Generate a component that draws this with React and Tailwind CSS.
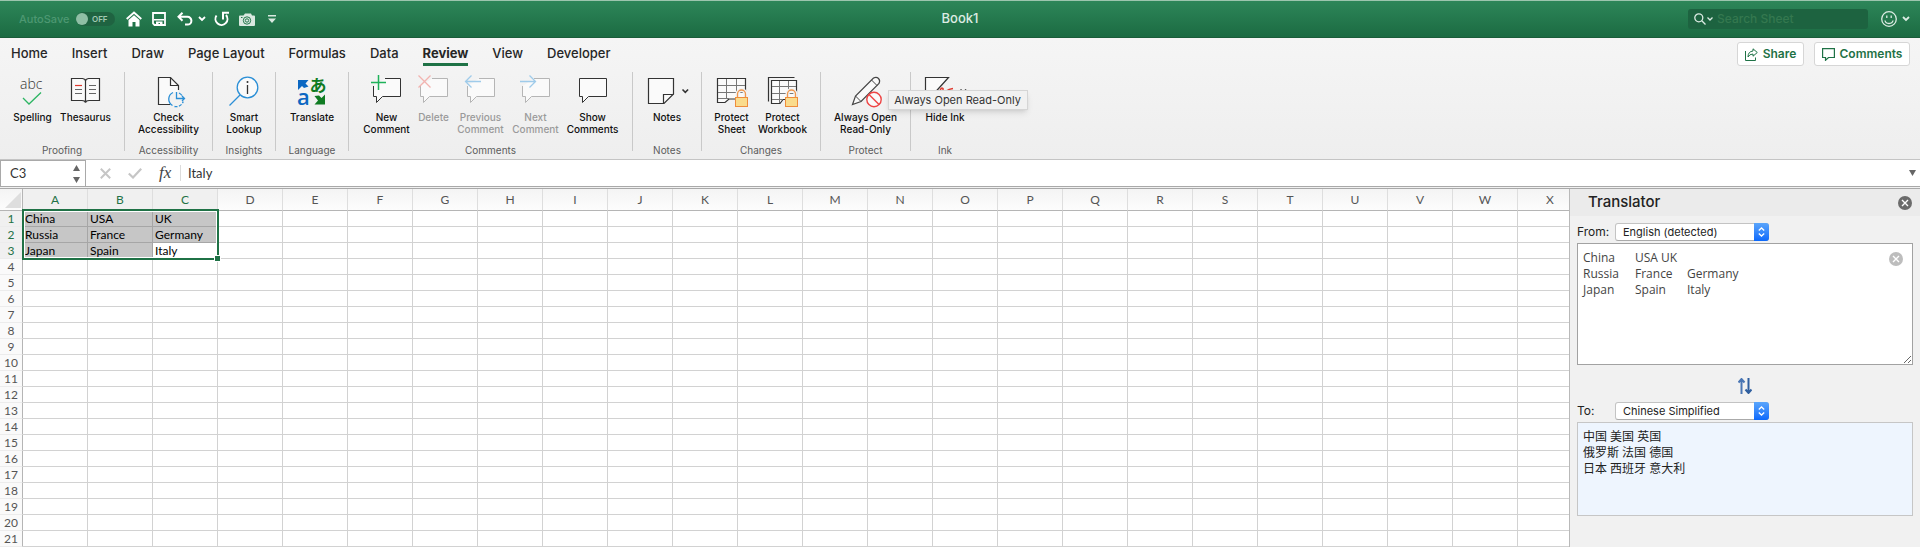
import React from 'react';
import clsx from 'clsx';

const TABS = ['Home', 'Insert', 'Draw', 'Page Layout', 'Formulas', 'Data', 'Review', 'View', 'Developer'];
const COLUMNS = 'ABCDEFGHIJKLMNOPQRSTUVWX'.split('');
const ROWS = Array.from({ length: 21 }, (_, i) => i + 1);
const DATA = [
  ['China', 'USA', 'UK'],
  ['Russia', 'France', 'Germany'],
  ['Japan', 'Spain', 'Italy'],
];

const Icon = ({ children }) => (
  <svg className="h-9 w-9 overflow-visible" viewBox="0 0 36 36" fill="none" aria-hidden="true">
    {children}
  </svg>
);

const Chevron = ({ className }) => (
  <svg className={className} width="8" height="6" viewBox="0 0 8 6" fill="none" stroke="currentColor" strokeWidth="1.8" aria-hidden="true">
    <path d="M1 1l3 3 3-3" />
  </svg>
);

const Bubble = ({ cut, stroke = '#333' }) => (
  <path
    d={
      cut
        ? 'M16 6.5H31.5V24.5H13.5L7.5 30.5V24.5H4.5V14'
        : 'M4.5 6.5H31.5V24.5H13.5L7.5 30.5V24.5H4.5Z'
    }
    fill="#fafafa"
    stroke={stroke}
  />
);

const Lock = ({ x }) => (
  <g transform={`translate(${x} 0)`}>
    <path d="M2.5 25V22a4 4 0 0 1 8 0V25" stroke="#f3f3f3" strokeWidth="4" />
    <path d="M2.5 25V22a4 4 0 0 1 8 0V25" stroke="#f0964b" strokeWidth="1.3" />
    <rect x="0.5" y="25.5" width="12" height="9" fill="#fadc8c" stroke="#ee8d3c" />
  </g>
);

const SpellingIcon = () => (
  <Icon>
    <text x="5" y="17" fontSize="14" fontWeight="300" fontFamily="Open Sans, sans-serif" fill="#333">abc</text>
    <path d="M8 26l6 6L26 20.500" stroke="#2db563" strokeWidth="1.300" />
  </Icon>
);

const ThesaurusIcon = () => (
  <Icon>
    <path d="M3.500 6.500H14.500Q17.500 7 17.500 9Q17.500 7 20.500 6.500H31.500V28.500H21Q18 28.500 17.500 30.500Q17 28.500 14 28.500H3.500Z" fill="#fafafa" stroke="#333" strokeWidth="1.200" />
    <path d="M17.500 9V30" stroke="#333" strokeWidth="1.200" />
    <path d="M7 13.500H14" stroke="#e0392e" strokeWidth="1.200" />
    <path d="M7 17.500H14M7 21.500H14M21 13.500H28M21 17.500H28M21 21.500H28" stroke="#666" />
  </Icon>
);

const AccessibilityIcon = () => (
  <Icon>
    <path d="M19 32.500H7.500V5.500H19.500L27.500 13.500V18" fill="#fafafa" stroke="#333" strokeWidth="1.200" />
    <path d="M19.500 5.500V13.500H27.500" stroke="#333" strokeWidth="1.200" />
    <circle cx="25" cy="27.300" r="7.300" fill="#f2f2f2" />
    <path d="M22 20.500a7.300 7.300 0 0 0-.5 13" stroke="#2b8fd6" strokeWidth="1.300" />
    <path d="M23.500 34.500a7.300 7.300 0 0 0 8.700-5" stroke="#2b8fd6" strokeWidth="1.300" strokeDasharray="3 1.500" />
    <path d="M25.500 20V26.500H33.500M31 24l2.500 2.500L31 29" stroke="#2b8fd6" strokeWidth="1.300" />
    <path d="M28 21a7.300 7.300 0 0 1 3 2.500" stroke="#2b8fd6" strokeWidth="1.300" />
  </Icon>
);

const LookupIcon = () => (
  <Icon>
    <circle cx="21.500" cy="15.500" r="10.300" fill="#fafafa" stroke="#2b8fd6" strokeWidth="1.300" />
    <path d="M14 23L3.500 33.500" stroke="#2b8fd6" strokeWidth="1.300" />
    <path d="M21.500 13V22" stroke="#333" strokeWidth="1.300" />
    <circle cx="21.500" cy="10" r="1" fill="#333" />
  </Icon>
);

const TranslateIcon = () => (
  <Icon>
    <path d="M4 8H14.500L11.500 11.500L14.500 14.500L10 16L8 14L4 18Z" fill="#0b67c2" />
    <text x="3" y="32.500" fontSize="22" fontWeight="600" fontFamily="Open Sans, sans-serif" fill="#0b67c2">a</text>
    <text x="15.500" y="19.500" fontSize="17" fontWeight="700" fontFamily="Noto Sans CJK JP, sans-serif" fill="#0f7b22">あ</text>
    <path d="M31 22.500V32.500H20.500L24 28.500L20.500 24L25 23.500L27.500 26Z" fill="#0f7b22" />
  </Icon>
);

const NewCommentIcon = () => (
  <Icon>
    <Bubble cut />
    <path d="M9.500 3V18M2 10.500H17" stroke="#1fb25a" strokeWidth="1.500" />
  </Icon>
);

const DeleteIcon = () => (
  <Icon>
    <Bubble cut stroke="#b5b5b5" />
    <path d="M2.500 3.500l12 12M14.500 3.500l-12 12" stroke="#f2b3b0" strokeWidth="1.300" />
  </Icon>
);

const PreviousIcon = () => (
  <Icon>
    <Bubble cut stroke="#b5b5b5" />
    <path d="M18 9.500H3M8.500 3.500l-6 6 6 6" stroke="#9fcbea" strokeWidth="1.300" />
  </Icon>
);

const NextIcon = () => (
  <Icon>
    <Bubble cut stroke="#b5b5b5" />
    <path d="M2 9.500H17M11.500 3.500l6 6-6 6" stroke="#9fcbea" strokeWidth="1.300" />
  </Icon>
);

const ShowIcon = () => (
  <Icon>
    <Bubble />
  </Icon>
);

const NotesIcon = () => (
  <Icon>
    <path d="M-.5 6.500H24.500V22L15 31.500H-.5Z" fill="#fafafa" stroke="#333" strokeWidth="1.200" />
    <path d="M14.500 31.500V22.500H24.500" stroke="#333" strokeWidth="1.200" />
    <path d="M33.500 17.500l2.800 2.800 2.800-2.800" stroke="#333" strokeWidth="1.600" />
  </Icon>
);

const ProtectSheetIcon = () => (
  <Icon>
    <path d="M3.500 6.500H31.500V27H15L11 30.500H3.500Z" fill="#fafafa" stroke="#333" strokeWidth="1.200" />
    <path d="M4 13.500H31M4 20.500H31M12.500 7V26M22.500 7V26M4 26.500H15" stroke="#777" />
    <Lock x={21} />
  </Icon>
);

const ProtectWorkbookIcon = () => (
  <Icon>
    <path d="M3.500 29.500V5.500H29.500" stroke="#333" strokeWidth="1.200" />
    <path d="M6.500 8.500H31.500V27.500H18L15 31.500H6.500Z" fill="#fafafa" stroke="#333" strokeWidth="1.200" />
    <path d="M7 14.500H31M7 21.500H31M14.500 9V31M23.500 9V27M7 27.500H18" stroke="#777" />
    <Lock x={20} />
  </Icon>
);

const ReadOnlyIcon = () => (
  <Icon>
    <path d="M4.500 32.500L7.500 24L25.500 6Q28.500 4.500 30.500 6.500Q32.500 8.500 31 11.500L13 29.500Z" fill="#fafafa" stroke="#444" strokeWidth="1.200" />
    <path d="M7.500 24L13 29.500M23.500 8L29 13.500" stroke="#444" />
    <circle cx="26" cy="27.500" r="7.200" fill="#fafafa" stroke="#ee4444" strokeWidth="1.400" />
    <path d="M21 22.500l10 10" stroke="#ee4444" strokeWidth="1.400" />
  </Icon>
);

const HideInkIcon = () => (
  <Icon>
    <path d="M-1.500 30V5.500H21.500L3 26" fill="#fafafa" stroke="#333" strokeWidth="1.200" />
    <path d="M13 19q1-4 3-2.500v3M19 19q3-2 7-2.500" stroke="#e0392e" strokeWidth="1.500" />
    <path d="M33.500 17.500l2.800 2.800 2.800-2.800" stroke="#333" strokeWidth="1.600" />
  </Icon>
);

const GROUPS = [
  {
    name: 'Proofing',
    width: 'w-[124px]',
    items: [
      { lines: ['Spelling'], icon: SpellingIcon, width: 'w-10' },
      { lines: ['Thesaurus'], icon: ThesaurusIcon, width: 'w-[52px]' },
    ],
  },
  { name: 'Accessibility', width: 'w-[87px]', items: [{ lines: ['Check', 'Accessibility'], icon: AccessibilityIcon, width: 'w-16' }] },
  { name: 'Insights', width: 'w-[62px]', items: [{ lines: ['Smart', 'Lookup'], icon: LookupIcon, width: 'w-10' }] },
  { name: 'Language', width: 'w-[72px]', items: [{ lines: ['Translate'], icon: TranslateIcon, width: 'w-12' }] },
  {
    name: 'Comments',
    width: 'w-[283px]',
    items: [
      { lines: ['New', 'Comment'], icon: NewCommentIcon, width: 'w-12' },
      { lines: ['Delete'], icon: DeleteIcon, width: 'w-8', disabled: true },
      { lines: ['Previous', 'Comment'], icon: PreviousIcon, width: 'w-12', disabled: true },
      { lines: ['Next', 'Comment'], icon: NextIcon, width: 'w-12', disabled: true },
      { lines: ['Show', 'Comments'], icon: ShowIcon, width: 'w-[52px]' },
    ],
  },
  { name: 'Notes', width: 'w-[68px]', items: [{ lines: ['Notes'], icon: NotesIcon, width: 'w-10' }] },
  {
    name: 'Changes',
    width: 'w-[118px]',
    items: [
      { lines: ['Protect', 'Sheet'], icon: ProtectSheetIcon, width: 'w-9' },
      { lines: ['Protect', 'Workbook'], icon: ProtectWorkbookIcon, width: 'w-[52px]' },
    ],
  },
  {
    name: 'Protect',
    width: 'w-[89px]',
    items: [{ lines: ['Always Open', 'Read-Only'], icon: ReadOnlyIcon, width: 'w-16', tooltip: 'Always Open Read-Only' }],
  },
  { name: 'Ink', width: 'w-[68px]', items: [{ lines: ['Hide Ink'], icon: HideInkIcon, width: 'w-12' }], last: true },
];

function TitleBar() {
  return (
    <header className="grid h-[38px] grid-cols-[1fr_auto_1fr] items-center border-t border-b border-t-[#9cc5ae] border-b-[#1a5c39] bg-linear-to-b from-[#2d8659] to-[#1b6b42] text-white">
      <div className="flex items-center pl-[19px]">
        <span className="w-[50px] text-[11px] font-medium whitespace-nowrap text-[#4d9872]">AutoSave</span>
        <button role="switch" aria-checked="false" aria-label="AutoSave" className="ml-[7px] flex h-[14px] w-[39px] items-center gap-1 rounded-full bg-[#1f6341] text-[8px] font-semibold text-[#a3c9b4]">
          <span className="h-3 w-3 rounded-full bg-[#8fbfa5]" />
          OFF
        </button>
        <button aria-label="Home" className="ml-[11px]">
          <svg width="16" height="16" viewBox="0 0 16 16" fill="none" aria-hidden="true">
            <path d="M.7 8L8 1.500L15.300 8" stroke="#fff" strokeWidth="1.900" />
            <path d="M2.500 9L8 4.200L13.500 9V15.500H9.500V11H6.500V15.500H2.500Z" fill="#fff" />
          </svg>
        </button>
        <button aria-label="Save" className="ml-[10px]">
          <svg width="14" height="14" viewBox="0 0 14 14" fill="none" aria-hidden="true">
            <path d="M1 1H13V13H2.500L1 11.500Z" stroke="#fff" strokeWidth="1.800" />
            <path d="M2 7H12V8.500H2ZM4 9.500H10.500V13H8V11H6.500V13H4Z" fill="#fff" />
          </svg>
        </button>
        <button aria-label="Undo" className="ml-[11px]">
          <svg width="16" height="14" viewBox="0 0 16 14" fill="none" stroke="#fff" strokeWidth="2" aria-hidden="true">
            <path d="M5.500.8L1.500 4.800L5.500 8.800M2 4.800H10.500a3.900 3.900 0 0 1 0 7.800H8" />
          </svg>
        </button>
        <button aria-label="Undo history" className="ml-[5px]"><Chevron /></button>
        <button aria-label="Redo" className="ml-2">
          <svg width="16" height="16" viewBox="0 0 16 16" fill="none" stroke="#fff" strokeWidth="2" aria-hidden="true">
            <path d="M2.500 4.500A6 6 0 1 0 12 4M8 1.800H15M9 1.500V8.500" />
          </svg>
        </button>
        <button aria-label="Camera" className="ml-[9px]">
          <svg width="16" height="13" viewBox="0 0 16 13" aria-hidden="true">
            <path d="M1 2.500H4.500L6 .5H12L13 2.500H15Q16 2.500 16 3.500V12Q16 13 15 13H1Q0 13 0 12V3.500Q0 2.500 1 2.500Z" fill="#d9e9e0" />
            <circle cx="8" cy="7.500" r="3.700" fill="none" stroke="#23774b" />
            <circle cx="8" cy="7.500" r="1.700" fill="none" stroke="#23774b" />
            <path d="M2 4.500H3.500" stroke="#23774b" />
          </svg>
        </button>
        <button aria-label="Customize toolbar" className="ml-[13px]">
          <svg width="8" height="8" viewBox="0 0 8 8" fill="#d9e9e0" aria-hidden="true">
            <path d="M0 0H8V1.500H0ZM0 3.500H8L4 8Z" />
          </svg>
        </button>
      </div>
      <h1 className="text-[13px] font-medium text-[#dcebe3]">Book1</h1>
      <div className="flex items-center justify-end pr-[10px]">
        <label className="flex h-5 w-[180px] items-center rounded-[3px] bg-[#1d6340] pl-[6px]">
          <svg width="12" height="12" viewBox="0 0 12 12" fill="none" stroke="#dcebe3" strokeWidth="1.300" aria-hidden="true">
            <circle cx="4.800" cy="4.800" r="4" />
            <path d="M7.800 7.800l3.700 3.700" />
          </svg>
          <svg className="ml-px" width="6" height="4" viewBox="0 0 6 4" fill="none" stroke="#dcebe3" strokeWidth="1.300" aria-hidden="true">
            <path d="M.5.500L3 3 5.500.500" />
          </svg>
          <input type="search" placeholder="Search Sheet" aria-label="Search Sheet" className="ml-1 w-[140px] bg-transparent text-xs font-medium outline-none placeholder:text-[#34784f]" />
        </label>
        <button aria-label="Feedback" className="ml-[13px] flex items-center gap-[5px] text-[#dcebe3]">
          <svg width="16" height="16" viewBox="0 0 16 16" fill="none" stroke="currentColor" strokeWidth="1.300" aria-hidden="true">
            <circle cx="8" cy="8" r="7.300" />
            <path d="M4 9.500q.5 3 4 3t4-3M5.800 4.500v2.500M10.200 4.500v2.500" />
          </svg>
          <Chevron />
        </button>
      </div>
    </header>
  );
}

function TabBar() {
  return (
    <div className="flex h-[34px] items-start justify-between pr-[10px] pl-[11px]">
      <nav className="flex gap-6 pt-[6px] text-[13px] leading-[19px] font-medium">
        {TABS.map((tab) => (
          <a
            key={tab}
            href="#"
            className={clsx('border-b-[3px] whitespace-nowrap', tab === 'Review' ? 'border-[#1f7246] font-bold' : 'border-transparent')}
          >
            {tab}
          </a>
        ))}
      </nav>
      <div className="flex gap-[10px] pt-1 text-xs font-semibold text-[#1f7246]">
        <button className="flex h-6 w-[67px] items-center justify-center gap-[5px] rounded-[3px] border border-[#d6d6d6] bg-white">
          <svg width="13" height="13" viewBox="0 0 13 13" fill="none" stroke="currentColor" aria-hidden="true">
            <path d="M.5 3V12.500H10.500V9.500" />
            <path d="M8 .8L12.300 4.500L8 8.200V6Q4.500 6 3 9Q3 3.500 8 3Z" />
          </svg>
          Share
        </button>
        <button className="flex h-6 w-24 items-center justify-center gap-[5px] rounded-[3px] border border-[#d6d6d6] bg-white">
          <svg width="13" height="13" viewBox="0 0 13 13" fill="none" stroke="currentColor" strokeWidth="1.200" aria-hidden="true">
            <path d="M.6.600H12.400V9.500H6.500L3.500 12.300V9.500H.6Z" />
          </svg>
          Comments
        </button>
      </div>
    </div>
  );
}

function RibbonItem({ lines, icon: Glyph, width, disabled, tooltip }) {
  return (
    <div className="relative">
      <button disabled={disabled} className={clsx('flex flex-col items-center text-[10px] leading-3 font-medium', width, disabled ? 'text-[#9a9a9a]' : 'text-[#111]')}>
        <Glyph />
        <span className="mt-[3px] flex flex-col items-center whitespace-nowrap">
          {lines.map((line) => (
            <span key={line}>{line}</span>
          ))}
        </span>
      </button>
      {tooltip && (
        <div role="tooltip" className="absolute top-[18px] left-[54px] z-10 flex h-5 w-[140px] items-center justify-center border border-[#d5d5d5] bg-[#f1f1f1] text-[11px] whitespace-nowrap text-[#333] shadow-md">
          {tooltip}
        </div>
      )}
    </div>
  );
}

function Ribbon() {
  return (
    <div className="flex h-[88px] border-b border-[#c4c4c4]">
      {GROUPS.map((group) => (
        <React.Fragment key={group.name}>
          <section className={clsx('flex flex-col items-center', group.width)}>
            <div className="flex gap-[7px]">
              {group.items.map((item) => (
                <RibbonItem key={item.lines.join(' ')} {...item} />
              ))}
            </div>
            <h2 className="mt-auto pb-[3px] text-[10px] leading-3 text-[#5c5c5c]">{group.name}</h2>
          </section>
          {!group.last && <div className="h-[79px] w-px bg-[#c9c9c9]" />}
        </React.Fragment>
      ))}
    </div>
  );
}

function FormulaBar() {
  return (
    <div className="flex h-[27px] items-stretch border-b border-[#a9a9a9] bg-white">
      <div className="flex w-[86px] items-center justify-between border border-b-0 border-[#a9a9a9] pr-[5px] pl-[9px]">
        <input aria-label="Name box" defaultValue="C3" className="w-12 pt-px font-[Lato] text-[13px] text-[#333] outline-none" />
        <svg width="7" height="18" viewBox="0 0 7 18" fill="#666" aria-hidden="true">
          <path d="M3.500 0L7 6H0ZM3.500 18L0 12H7Z" />
        </svg>
      </div>
      <div className="flex flex-1 items-center pr-1 pl-[14px]">
        <button aria-label="Cancel">
          <svg width="11" height="11" viewBox="0 0 11 11" stroke="#c6c6c6" strokeWidth="2" aria-hidden="true">
            <path d="M.8.800L10.200 10.200M10.200.800L.8 10.200" />
          </svg>
        </button>
        <button aria-label="Enter" className="ml-[17px]">
          <svg width="14" height="11" viewBox="0 0 14 11" fill="none" stroke="#c6c6c6" strokeWidth="2.200" aria-hidden="true">
            <path d="M.8 5.500L5 9.500L13.200.8" />
          </svg>
        </button>
        <button aria-label="Insert function" className="ml-[17px] w-[22px] border-r border-[#dcdcdc] text-left font-['Liberation_Serif'] text-[17px] leading-4 text-[#444] italic">
          fx
        </button>
        <input aria-label="Formula" defaultValue="Italy" className="ml-[7px] flex-1 pt-px font-[Lato] text-[13px] text-[#333] outline-none" />
        <button aria-label="Expand formula bar">
          <svg width="7" height="6" viewBox="0 0 7 6" fill="#666" aria-hidden="true">
            <path d="M0 0H7L3.500 6Z" />
          </svg>
        </button>
      </div>
    </div>
  );
}

function Sheet() {
  return (
    <div className="relative min-w-0 flex-1 overflow-hidden bg-white font-[Lato]">
      <table className="w-[1583px] table-fixed border-separate border-spacing-0">
        <thead>
          <tr className="h-[22px] bg-linear-to-b from-[#f4f4f4] to-[#fdfdfd]">
            <th className="w-[23px] border-r border-b border-[#b5b5b5] p-0">
              <svg className="ml-[5px]" width="16" height="16" viewBox="0 0 16 16" fill="#dedede" aria-hidden="true">
                <path d="M16 0V16H0Z" />
              </svg>
            </th>
            {COLUMNS.map((col, i) => (
              <th
                key={col}
                scope="col"
                className={clsx('w-[65px] border-r border-b border-r-[#dedede] border-b-[#b5b5b5] p-0 text-xs font-normal', i < 3 ? 'bg-[#f0f0f0] text-[#1f7246]' : 'text-[#555]')}
              >
                {col}
              </th>
            ))}
          </tr>
        </thead>
        <tbody>
          {ROWS.map((row, r) => (
            <tr key={row} className="h-4">
              <th
                scope="row"
                className={clsx('border-r border-b border-r-[#b5b5b5] border-b-[#ececec] p-0 text-xs leading-[15px] font-normal', r < 3 ? 'bg-[#f0f0f0] text-[#1f7246]' : 'bg-[#fafafa] text-[#555]')}
              >
                {row}
              </th>
              {COLUMNS.map((col, c) => {
                const selected = r < 3 && c < 3 && !(r === 2 && c === 2);
                return (
                  <td
                    key={col}
                    className={clsx('border-r border-b p-0 pl-[2px] text-xs leading-[15px] text-black', selected ? 'border-[#a6a6a6] bg-[#c6c6c6]' : 'border-[#d2d2d2]')}
                  >
                    {DATA[r]?.[c]}
                  </td>
                );
              })}
            </tr>
          ))}
        </tbody>
      </table>
      {/* Selection outline and fill handle */}
      <div className="pointer-events-none absolute top-5 left-[22px] h-[51px] w-[197px] border-2 border-[#1f7246]">
        <div className="h-full border border-white" />
        <div className="absolute -right-[4px] -bottom-[4px] h-[7px] w-[7px] border border-white bg-[#1f7246]" />
      </div>
    </div>
  );
}

function LanguageSelect({ id, label, value }) {
  return (
    <div className="flex items-center">
      <label htmlFor={id} className="w-[38px] text-xs text-[#222]">{label}</label>
      <div className="relative">
        <select id={id} defaultValue={value} className="block h-[18px] w-[154px] appearance-none rounded-[3px] border border-[#c3c3c3] border-b-[#aaa] bg-white pl-[7px] text-[11px] leading-4 text-[#222]">
          <option>{value}</option>
        </select>
        <span className="pointer-events-none absolute inset-y-0 right-0 flex w-[15px] items-center justify-center rounded-r-[3px] bg-linear-to-b from-[#5aa5fb] to-[#0a68fb]">
          <svg width="7" height="10" viewBox="0 0 7 10" fill="none" stroke="#fff" strokeWidth="1.300" aria-hidden="true">
            <path d="M.8 3.500L3.500 1L6.200 3.500M.8 6.500L3.500 9L6.200 6.500" />
          </svg>
        </span>
      </div>
    </div>
  );
}

const CloseIcon = ({ fill }) => (
  <svg className="block" width="14" height="14" viewBox="0 0 14 14" aria-hidden="true">
    <circle cx="7" cy="7" r="7" fill={fill} />
    <path d="M4 4l6 6M10 4l-6 6" stroke="#fff" strokeWidth="1.400" />
  </svg>
);

function Translator() {
  return (
    <aside className="w-[351px] shrink-0 border-l border-[#b9b9b9] bg-[#f1f1f1]">
      <div className="flex h-[27px] items-center justify-between bg-[#ebebeb] pr-2 pl-[18px]">
        <h2 className="text-[15px] font-medium text-[#222]">Translator</h2>
        <button aria-label="Close"><CloseIcon fill="#6b6b6b" /></button>
      </div>
      <div className="flex flex-col pt-[7px] pr-[7px] pl-[7px]">
        <LanguageSelect id="from" label="From:" value="English (detected)" />
        <div className="relative mt-[2px]">
          <textarea
            aria-label="Source text"
            defaultValue={'China\tUSA UK\nRussia\tFrance\tGermany\nJapan\tSpain\tItaly'}
            className="block h-[122px] w-full border border-[#a2a2a2] bg-white px-[5px] py-[6px] font-['Open_Sans'] text-xs leading-4 text-[#444] outline-none [tab-size:52px]"
          />
          <button aria-label="Clear" className="absolute top-[9px] right-[10px]"><CloseIcon fill="#bdbdbd" /></button>
        </div>
        <button aria-label="Swap languages" className="mt-[13px] mb-2 self-center">
          <svg className="block" width="14" height="16" viewBox="0 0 14 16" fill="none" aria-hidden="true">
            <path d="M3.500 16V1M.5 4.500L3.500 1L6.500 4.500" stroke="#4a76b4" strokeWidth="2" />
            <path d="M10.500 0V15M7.500 11.500L10.500 15L13.500 11.500" stroke="#2f5f9f" strokeWidth="2" />
          </svg>
        </button>
        <LanguageSelect id="to" label="To:" value="Chinese Simplified" />
        <div className="mt-[2px] h-[94px] border border-[#c6c6c6] bg-[#eef5fe] px-[5px] py-[6px] font-['Open_Sans','Noto_Sans_CJK_SC',sans-serif] text-xs leading-4 text-[#222]">
          <p>中国 美国 英国</p>
          <p>俄罗斯 法国 德国</p>
          <p>日本 西班牙 意大利</p>
        </div>
      </div>
    </aside>
  );
}

export default function App() {
  return (
    <div className="flex min-h-screen flex-col overflow-hidden bg-[#f1f1f1] font-[Inter] text-[#262626]">
      <TitleBar />
      <div className="bg-linear-to-b from-[#f5f5f5] to-[#eeeeee]">
        <TabBar />
        <Ribbon />
      </div>
      <FormulaBar />
      <main className="mt-px flex flex-1 border-t border-[#a9a9a9]">
        <Sheet />
        <Translator />
      </main>
    </div>
  );
}
